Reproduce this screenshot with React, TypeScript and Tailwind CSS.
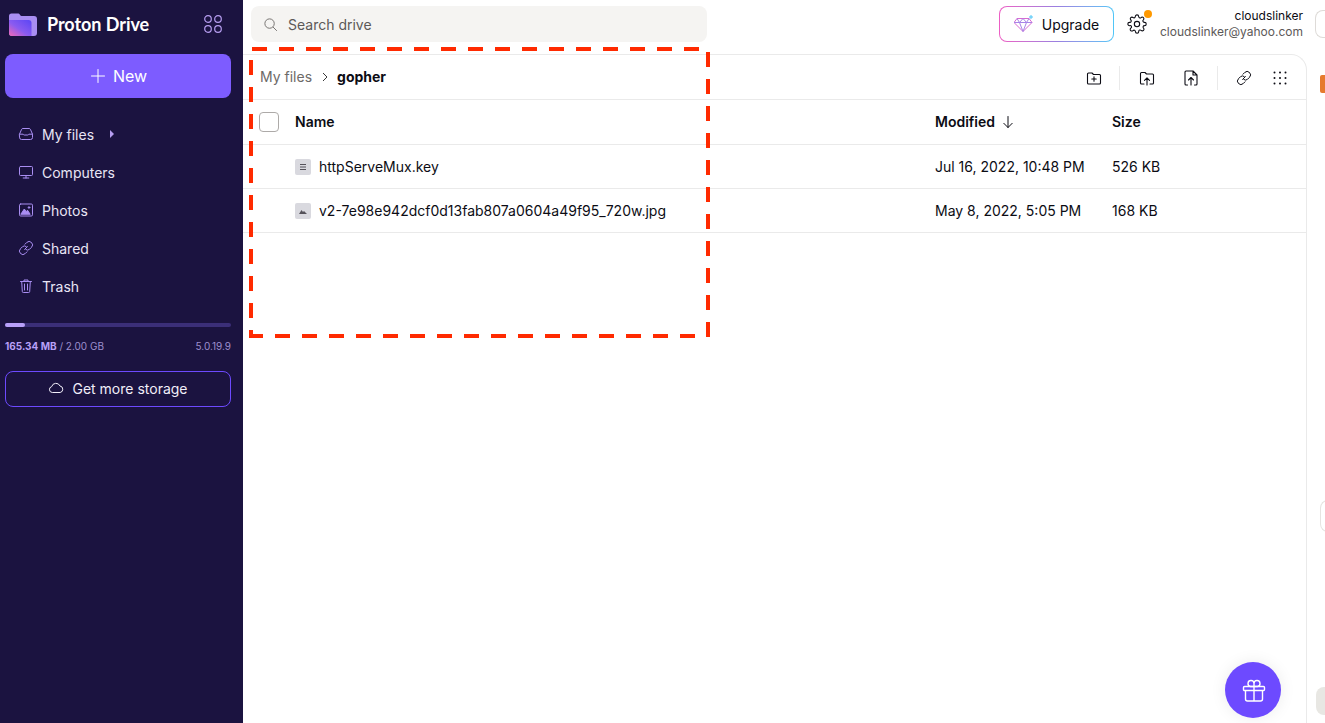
import React from "react";

const S = ({ children, size = 16, className = "", sw = 1 }: { children: React.ReactNode; size?: number; className?: string; sw?: number }) => (
  <svg width={size} height={size} viewBox="0 0 16 16" fill="none" stroke="currentColor" strokeWidth={sw} strokeLinecap="round" strokeLinejoin="round" className={className}>
    {children}
  </svg>
);

const navIcons: Record<string, React.ReactNode> = {
  inbox: (
    <S>
      <path d="M1.5 8.2 3.6 3.300a1.500 1.500 0 0 1 1.400-.8h6a1.500 1.500 0 0 1 1.400.8l2.100 4.900v3.300a2 2 0 0 1-2 2h-9a2 2 0 0 1-2-2Z" />
      <path d="M1.500 8.200h3.700a1.200 1.200 0 0 0 1 .8h3.600a1.200 1.200 0 0 0 1-.8h3.700" />
    </S>
  ),
  monitor: (
    <S>
      <rect x="1.500" y="2.500" width="13" height="9" rx="1" />
      <path d="M8 11.500v2.500M5.200 14h5.600" />
    </S>
  ),
  photo: (
    <S>
      <rect x="1.500" y="2" width="13" height="12" rx="1.200" />
      <path d="m3 12 3.300-5 1.900 2.600 1.300-1.400 2.500 3.800Z" fill="currentColor" />
      <circle cx="11" cy="5.500" r="0.8" fill="currentColor" />
    </S>
  ),
  link: (
    <S>
      <path d="m6.600 9.400 2.800-2.800M7 4.200l1.700-1.700a2.900 2.900 0 0 1 4.800 4.800l-2 2a2.900 2.900 0 0 1-3.700.2" />
      <path d="M9 11.800l-1.700 1.700a2.900 2.900 0 0 1-4.800-4.800l2-2a2.900 2.900 0 0 1 3.700-.2" />
    </S>
  ),
  trash: (
    <S>
      <path d="M2.500 3.500h11M6 3.500V2h4v1.500M3.700 3.500l.6 10a1 1 0 0 0 1 1h5.400a1 1 0 0 0 1-1l.6-10M6.500 6v6M9.500 6v6" />
    </S>
  ),
};

const nav = [
  { label: "My files", icon: "inbox", caret: true },
  { label: "Computers", icon: "monitor" },
  { label: "Photos", icon: "photo" },
  { label: "Shared", icon: "link" },
  { label: "Trash", icon: "trash" },
];

function Sidebar() {
  return (
    <aside className="w-[243px] shrink-0 bg-[#1b1340] flex flex-col px-[5px] text-[#f1eef9]">
      <div className="h-[54px] flex items-center pl-[4px] pr-[16px] pb-[6px] justify-between">
        <div className="flex items-center gap-[10px]">
          <svg width="28" height="23" viewBox="0 0 28 23">
            <defs>
              <linearGradient id="fg" x1="0" y1="1" x2="1" y2="0">
                <stop offset="0" stopColor="#f26ab5" />
                <stop offset="0.45" stopColor="#8a5bf0" />
                <stop offset="1" stopColor="#5a45f5" />
              </linearGradient>
            </defs>
            <path d="M0 3a2.500 2.500 0 0 1 2.500-2.500h6.300c1 0 1.600.5 2.300 1.400.5.7 1 1 2 1H25a3 3 0 0 1 3 3V20a3 3 0 0 1-3 3H3a3 3 0 0 1-3-3Z" fill="#a98ef2" />
            <path d="M0 7h19.500a3 3 0 0 1 3 3v13H3a3 3 0 0 1-3-3Z" fill="url(#fg)" />
          </svg>
          <span className="text-white text-[18px] font-bold tracking-[-0.05px] font-['Lato',sans-serif] whitespace-nowrap">Proton Drive</span>
        </div>
        <svg width="18" height="18" viewBox="0 0 18 18" fill="none" stroke="#b69df0" strokeWidth="1.200">
          <circle cx="4" cy="4" r="3.300" />
          <circle cx="14" cy="4" r="3.300" />
          <circle cx="4" cy="14" r="3.300" />
          <circle cx="14" cy="14" r="3.300" />
        </svg>
      </div>
      <button className="h-[44px] w-[226px] rounded-[8px] bg-[#7d5cff] text-white text-[16px] flex items-center justify-center gap-[8px]">
        <S size={16}>
          <path d="M9 1.500v13M2.500 8h13" />
        </S>
        New
      </button>
      <nav className="mt-[17px] flex flex-col">
        {nav.map((n) => (
          <div key={n.label} className="h-[38px] flex items-center pl-[13px] gap-[8px] text-[14px] text-[#e9e5f5]">
            <span className="text-[#a98ef2] flex">{navIcons[n.icon]}</span>
            <span>{n.label}</span>
            {n.caret && <span className="ml-[8px] w-0 h-0 border-y-[4px] border-y-transparent border-l-[4px] border-l-[#b69df0]" />}
          </div>
        ))}
      </nav>
      <div className="mt-[18px] h-[4px] w-[226px] rounded-full bg-[#3b2f78]">
        <div className="h-full w-[20px] rounded-full bg-[#b8a0f8]" />
      </div>
      <div className="w-[226px] mt-[12px] flex justify-between items-center text-[10px] leading-[14px] text-[#9d8fce]">
        <span>
          <b className="font-bold text-[#b8a0f8]">165.34 MB</b> / 2.00 GB
        </span>
        <span>5.0.19.9</span>
      </div>
      <button className="mt-[18px] w-[226px] h-[36px] pb-[2px] rounded-[8px] border border-[#6d4aff] text-[14px] text-[#f1eef9] flex items-center justify-center gap-[8px]">
        <svg width="16" height="16" viewBox="0 0 16 16" fill="none" stroke="currentColor">
          <path d="M4.300 12.500a3 3 0 0 1-.6-5.900 4.400 4.400 0 0 1 8.300-.6 3.300 3.300 0 0 1 .1 6.500Z" strokeLinejoin="round" />
        </svg>
        Get more storage
      </button>
    </aside>
  );
}

function TopBar() {
  return (
    <header className="h-[54px] shrink-0 flex items-center pl-[8px] overflow-hidden">
      <div className="w-[456px] h-[36px] mb-[6px] rounded-[8px] bg-[#f5f4f2] flex items-center pl-[12px] gap-[10px] text-[14px] text-[#5c5958]">
        <svg width="15" height="15" viewBox="0 0 16 16" fill="none" stroke="#706d6b">
          <circle cx="7" cy="7" r="5" />
          <path d="m11 11 3.500 3.500" strokeLinecap="round" />
        </svg>
        Search drive
      </div>
      <div className="ml-auto flex items-center mb-[6px]">
        <div className="w-[115px] h-[36px] rounded-[8px] p-px bg-gradient-to-r from-[#ed5ec4] via-[#9a7fe0] to-[#4fc6f7]">
          <div className="w-full h-full rounded-[7px] bg-white flex items-center justify-center gap-[8px] text-[14px] text-[#0c0c14]">
            <svg width="20" height="18" viewBox="0 0 20 18" fill="none" strokeWidth="1">
              <path d="M3 3.500h12l3 4-9 9-9-9Z" stroke="#d86ad0" />
              <path d="M0 7.500h18M5.500 7.500l3.500 9 3.500-9M3 3.500l2.500 4 3.500-4 3.500 4 2.500-4" stroke="#a884e8" />
              <path d="M17 0v4M15 2h4" stroke="#4fc6f7" />
            </svg>
            Upgrade
          </div>
        </div>
        <div className="relative ml-[13px] w-[20px] h-[20px] text-[#0c0c14]">
          <svg width="20" height="20" viewBox="0 0 24 24" fill="none" stroke="currentColor" strokeWidth="1.300" strokeLinecap="round" strokeLinejoin="round">
            <circle cx="12" cy="12" r="3.200" />
            <path d="M19.400 15a1.650 1.650 0 0 0 .33 1.820l.06.06a2 2 0 1 1-2.830 2.830l-.06-.06a1.650 1.650 0 0 0-2.820 1.170V21a2 2 0 0 1-4 0v-.09a1.650 1.650 0 0 0-2.770-1.080l-.06.06a2 2 0 1 1-2.830-2.830l.06-.06A1.650 1.650 0 0 0 3.090 14H3a2 2 0 0 1 0-4h.09A1.650 1.650 0 0 0 4.600 7.200l-.06-.06a2 2 0 1 1 2.830-2.830l.06.06A1.650 1.650 0 0 0 10 3.090V3a2 2 0 0 1 4 0v.09a1.650 1.650 0 0 0 2.770 1.220l.06-.06a2 2 0 1 1 2.830 2.830l-.06.06A1.650 1.650 0 0 0 21 10h.09a2 2 0 0 1 0 4H21a1.650 1.650 0 0 0-1.600 1Z" />
          </svg>
          <span className="absolute -top-[4px] -right-[5px] w-[8px] h-[8px] rounded-full bg-[#ff9900]" />
        </div>
        <div className="ml-[13px] flex flex-col items-end text-[12px] leading-[16px]">
          <span className="text-[#0c0c14]">cloudslinker</span>
          <span className="text-[#5c5958]">cloudslinker@yahoo.com</span>
        </div>
        <div className="ml-[12px] w-[10px] h-[28px] rounded-l-[8px] border border-r-0 border-[#dedbd8]" />
      </div>
    </header>
  );
}

function Toolbar() {
  const sep = <span className="w-px h-[24px] bg-[#eaeaea]" />;
  return (
    <div className="h-[45px] flex items-center pl-[17px] border-b border-[#eaeaea] shrink-0">
      <span className="text-[14px] text-[#6d6a68] pb-[2px]">My files</span>
      <svg className="ml-[9px] mr-[8px]" width="8" height="10" viewBox="0 0 8 10" fill="none" stroke="#3a3a3a">
        <path d="m2 1 4 4-4 4" />
      </svg>
      <span className="text-[14px] font-bold text-[#0c0c14] pb-[2px]">gopher</span>
      <div className="ml-auto flex items-center text-[#0c0c14] pr-[18px] pt-[1px]">
        <S sw={1.100}>
          <path d="M1.500 4a1 1 0 0 1 1-1H6l1.500 1.500h6a1 1 0 0 1 1 1V13a1 1 0 0 1-1 1h-11a1 1 0 0 1-1-1ZM8 6.800v4.400M5.800 9h4.400" />
        </S>
        <span className="ml-[17px] mr-[19px] flex">{sep}</span>
        <S sw={1.100}>
          <path d="M5 14H2.500a1 1 0 0 1-1-1V3.500a1 1 0 0 1 1-1H6L7.500 4h6a1 1 0 0 1 1 1v8a1 1 0 0 1-1 1H11M8 15V8M5.500 10.300 8 7.800l2.500 2.500" />
        </S>
        <span className="ml-[28px] flex">
          <S sw={1.100}>
            <path d="M4.500 15H3a1 1 0 0 1-1-1V2a1 1 0 0 1 1-1h7l4 4v9a1 1 0 0 1-1 1h-1.500M10 1v4h4M8 15V7.500M5.500 10 8 7.500l2.500 2.500" />
          </S>
        </span>
        <span className="mx-[18px] flex">{sep}</span>
        <span className="flex">{navIcons.link}</span>
        <span className="ml-[20px] flex">
          <svg width="16" height="16" viewBox="0 0 16 16" fill="currentColor">
            {[2.500, 8, 13.500].flatMap((y) => [2.500, 8, 13.500].map((x) => <circle key={`${x}-${y}`} cx={x} cy={y} r="1" />))}
          </svg>
        </span>
      </div>
    </div>
  );
}

const FileBadge = ({ kind }: { kind: "text" | "image" }) => (
  <span className="w-[16px] h-[16px] rounded-[2px] bg-[#d9d9df] flex items-center justify-center text-[#55525a]">
    {kind === "text" ? (
      <svg width="10" height="10" viewBox="0 0 10 10" stroke="currentColor" strokeWidth="1">
        <path d="M2 2.500h6M2 5h6M2 7.500h6" />
      </svg>
    ) : (
      <svg width="10" height="10" viewBox="0 0 10 10" fill="currentColor">
        <path d="m1 8 2.500-4L5 6l1-1 3 3Z" />
      </svg>
    )}
  </span>
);

const cols = "grid grid-cols-[52px_1fr_177px_194px] items-center";

function FileRow({ kind, name, modified, size }: { kind: "text" | "image"; name: string; modified: string; size: string }) {
  return (
    <div className={`${cols} h-[44px] border-b border-[#eaeaea] text-[14px] text-[#0c0c14]`}>
      <span className="col-start-2 flex items-center gap-[8px]">
        <FileBadge kind={kind} />
        {name}
      </span>
      <span className="whitespace-nowrap">{modified}</span>
      <span>{size}</span>
    </div>
  );
}

function Panel() {
  return (
    <div className="flex-1 min-h-0 flex">
      <main className="w-[1064px] shrink-0 flex flex-col border-t border-r border-[#eaeaea] rounded-tr-[16px]">
        <Toolbar />
        <div className={`${cols} h-[45px] border-b border-[#eaeaea] text-[14px] font-semibold text-[#0c0c14]`}>
          <span className="pl-[16px]">
            <span className="block w-[20px] h-[20px] rounded-[4px] border border-[#adaaa8] bg-white" />
          </span>
          <span className="pb-[2px]">Name</span>
          <span className="flex items-center gap-[7px] pb-[2px]">
            Modified
            <svg width="12" height="14" viewBox="0 0 12 14" fill="none" stroke="currentColor" strokeLinecap="round" strokeLinejoin="round" className="mt-[2px]">
              <path d="M6 1.500v11M1.800 8.300 6 12.500l4.200-4.200" />
            </svg>
          </span>
          <span className="pb-[2px]">Size</span>
        </div>
        <FileRow kind="text" name="httpServeMux.key" modified="Jul 16, 2022, 10:48 PM" size="526 KB" />
        <FileRow kind="image" name="v2-7e98e942dcf0d13fab807a0604a49f95_720w.jpg" modified="May 8, 2022, 5:05 PM" size="168 KB" />
      </main>
      <div className="flex-1 relative overflow-hidden">
        <span className="absolute left-[13px] top-[21px] w-[8px] h-[18px] rounded-[2px] bg-[#e67a2e]" />
        <span className="absolute left-[13px] top-[446px] w-[12px] h-[32px] rounded-l-[8px] border border-r-0 border-[#e6e4e1]" />
        <span className="absolute left-[9px] top-[633px] w-[12px] h-[28px] rounded-l-[8px] bg-[#e8e7e3]" />
      </div>
    </div>
  );
}

export default function App() {
  return (
    <div className="relative h-[723px] w-[1325px] overflow-hidden flex bg-white font-['Inter',sans-serif]">
      <Sidebar />
      <div className="flex-1 min-w-0 flex flex-col">
        <TopBar />
        <Panel />
      </div>
      <svg className="absolute left-[249px] top-[47px] pointer-events-none" width="461" height="291" fill="none" stroke="#ff2a00" strokeWidth="4" strokeDasharray="15 12">
        <path d="M3 2H461" />
        <path d="M459 5V291" />
        <path d="M-1 289H446" />
        <path d="M2 13V291" />
      </svg>
      <button className="absolute left-[1225px] top-[662px] w-[56px] h-[56px] rounded-full bg-[#6d4aff] text-white flex items-center justify-center shadow-[0_0_16px_rgba(0,0,0,0.08)]">
        <svg className="ml-[1px] mt-[1px]" width="24" height="24" viewBox="0 0 24 24" fill="none" stroke="currentColor" strokeWidth="1.400" strokeLinejoin="round">
          <rect x="1.500" y="7.500" width="21" height="4" rx="1" />
          <path d="M3.500 11.500V20a2 2 0 0 0 2 2h13a2 2 0 0 0 2-2v-8.500M12 7.500V22M12 7.500H8.500a3 3 0 1 1 3.500-3ZM12 7.500h3.500a3 3 0 1 0-3.500-3Z" />
        </svg>
      </button>
    </div>
  );
}
